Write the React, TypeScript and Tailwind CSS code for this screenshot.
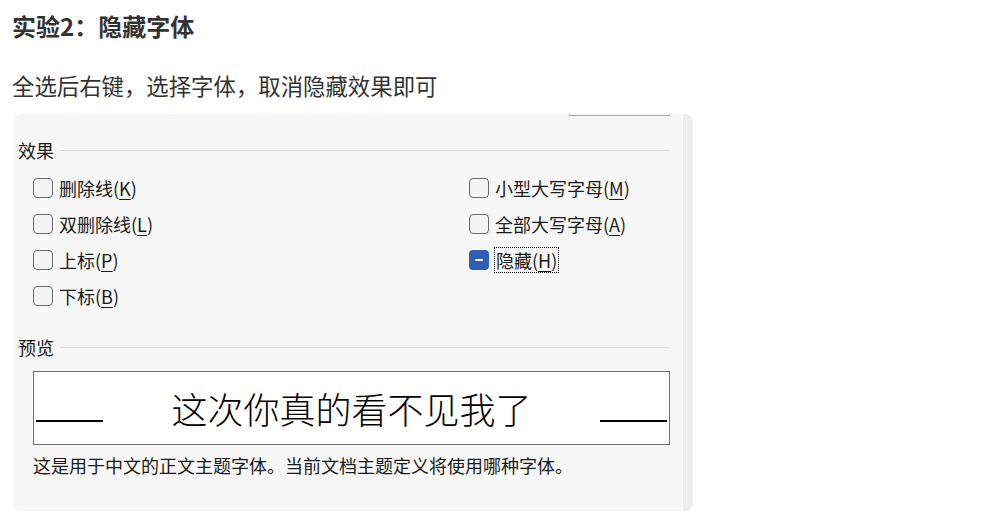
import React from 'react'

const cjk = { fontFamily: '"Noto Sans CJK SC", "Noto Sans", sans-serif' }

type Option = { label: string; key: string; state?: 'off' | 'mixed' }

const leftOptions: Option[] = [
  { label: '删除线', key: 'K' },
  { label: '双删除线', key: 'L' },
  { label: '上标', key: 'P' },
  { label: '下标', key: 'B' },
]

const rightOptions: Option[] = [
  { label: '小型大写字母', key: 'M' },
  { label: '全部大写字母', key: 'A' },
  { label: '隐藏', key: 'H', state: 'mixed' },
]

const CheckItem = ({ option }: { option: Option }) => {
  const mixed = option.state === 'mixed'
  return (
    <div className="flex items-center gap-[6px] h-[36px]">
      {mixed ? (
        <div className="w-[20px] h-[20px] rounded-[4px] bg-[#2f5eb6] flex items-center justify-center">
          <div className="w-[8px] h-[2px] rounded-full bg-white" />
        </div>
      ) : (
        <div className="w-[20px] h-[20px] rounded-[4px] border border-[#6a6a6a] bg-[#f4f4f4]" />
      )}
      <span
        className={
          mixed
            ? 'text-[18px] leading-[24px] text-[#1a1a1a] border border-dotted border-black px-px -ml-px'
            : 'text-[18px] leading-[24px] text-[#1a1a1a]'
        }
      >
        {option.label}(<span className="underline underline-offset-[3px] decoration-1">{option.key}</span>)
      </span>
    </div>
  )
}

const SectionLabel = ({ text }: { text: string }) => (
  <div className="flex items-center gap-[6px] pl-[5px] pr-[12px]">
    <span className="text-[18px] leading-[24px] text-[#1a1a1a]">{text}</span>
    <div className="flex-1 h-px bg-[#dddddd]" />
  </div>
)

export default function App() {
  return (
    <div className="min-h-screen bg-white pl-[12px] pt-[10px]" style={cjk}>
      <h1 className="text-[24px] leading-[32px] font-bold text-[#333333]">实验2：隐藏字体</h1>
      <p className="mt-[28px] text-[22.4px] leading-[30px] text-[#333333]">全选后右键，选择字体，取消隐藏效果即可</p>

      <div className="mt-[14px] ml-px w-[680px] h-[397px] rounded-lg bg-[#f7f7f7] flex overflow-hidden">
        <div className="flex-1 flex flex-col">
          <div className="flex justify-end pr-[12px]">
            <div className="w-[101px] h-[2px] border-x border-b border-[#aaaaaa]" />
          </div>

          <div className="mt-[22px]">
            <SectionLabel text="效果" />
          </div>

          <div className="mt-[8px] pl-[20px] grid grid-cols-[436px_1fr]">
            <div className="flex flex-col">
              {leftOptions.map((o) => (
                <CheckItem key={o.key} option={o} />
              ))}
            </div>
            <div className="flex flex-col">
              {rightOptions.map((o) => (
                <CheckItem key={o.key} option={o} />
              ))}
            </div>
          </div>

          <div className="mt-[21px]">
            <SectionLabel text="预览" />
          </div>

          <div className="mt-[12px] ml-[20px] mr-[12px] h-[74px] border border-[#707070] bg-white flex items-center justify-between px-[2px]">
            <div className="w-[67px] h-[1.5px] bg-black mt-[26px]" />
            <span className="text-[36px] leading-[44px] font-light text-black">这次你真的看不见我了</span>
            <div className="w-[67px] h-[1.5px] bg-black mt-[26px]" />
          </div>

          <p className="mt-[8px] ml-[20px] text-[18px] leading-[24px] text-[#1a1a1a]">
            这是用于中文的正文主题字体。当前文档主题定义将使用哪种字体。
          </p>
        </div>
        <div className="w-[11px] bg-[#eeeeee] border-l border-white" />
      </div>
    </div>
  )
}
